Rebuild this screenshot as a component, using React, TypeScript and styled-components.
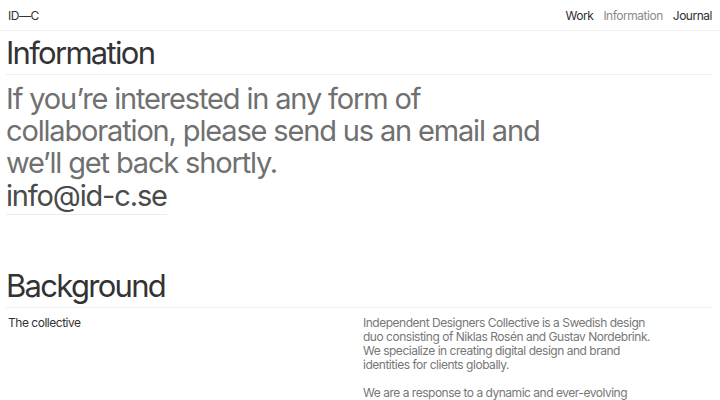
import React from "react";
import styled, { createGlobalStyle } from "styled-components";

const GlobalStyle = createGlobalStyle`
  html, body {
    margin: 0;
    padding: 0;
    background: #ffffff;
  }
  body {
    font-family: "Inter", "Liberation Sans", sans-serif;
    color: #333333;
    -webkit-font-smoothing: antialiased;
  }
`;

interface INavLinkProps {
  $active?: boolean;
}

const Page = styled.div`
  width: 720px;
  height: 400px;
  overflow: hidden;
`;

const Header = styled.header`
  height: 30px;
  display: flex;
  align-items: center;
  justify-content: space-between;
  padding: 0 8px;
  border-bottom: 1px solid #efefef;
  font-size: 12px;
  letter-spacing: -0.04em;
`;

const Logo = styled.div`
  color: #333;
`;

const Nav = styled.nav`
  display: flex;
  gap: 10px;
`;

const NavLink = styled.a<INavLinkProps>`
  color: ${(props) => (props.$active ? "#8a8a8a" : "#2e2e2e")};
  text-decoration: none;
`;

const Section = styled.section`
  padding: 0 8px 0 6px;
`;

const Title = styled.h2`
  margin: 0;
  font-size: 31px;
  line-height: 43px;
  font-weight: 400;
  letter-spacing: -0.055em;
  color: #333;
  border-bottom: 1px solid #efefef;
`;

const Lead = styled.p`
  margin: 8px 0 0;
  max-width: 560px;
  font-size: 29px;
  line-height: 32px;
  font-weight: 400;
  letter-spacing: -0.04em;
  color: #707070;
`;

const Mail = styled.a`
  display: inline-block;
  margin-top: 1px;
  color: #4a4a4a;
  font-size: 29px;
  line-height: 32px;
  letter-spacing: -0.04em;
  text-decoration: none;
  border-bottom: 1px solid #ececec;
  padding-bottom: 2px;
`;

const Spacer = styled.div`
  height: 49px;
`;

const Columns = styled.div`
  display: grid;
  grid-template-columns: 1fr 1fr;
  gap: 8px;
  padding-top: 8px;
  font-size: 12px;
  line-height: 14px;
  letter-spacing: -0.04em;
`;

const Label = styled.div`
  padding-left: 2px;
  color: #333;
`;

const Body = styled.div`
  max-width: 288px;
  color: #777;

  p {
    margin: 0 0 14px;
  }
`;

export default function App() {
  return (
    <Page>
      <GlobalStyle />
      <Header>
        <Logo>ID—C</Logo>
        <Nav>
          <NavLink href="#">Work</NavLink>
          <NavLink href="#" $active>
            Information
          </NavLink>
          <NavLink href="#">Journal</NavLink>
        </Nav>
      </Header>
      <Section>
        <Title>Information</Title>
        <Lead>
          If you’re interested in any form of collaboration, please send us an email and we’ll get back shortly.
        </Lead>
        <Mail href="#">info@id-c.se</Mail>
        <Spacer />
        <Title>Background</Title>
        <Columns>
          <Label>The collective</Label>
          <Body>
            <p>
              Independent Designers Collective is a Swedish design duo consisting of Niklas Rosén and Gustav
              Nordebrink. We specialize in creating digital design and brand identities for clients globally.
            </p>
            <p>We are a response to a dynamic and ever-evolving landscape.</p>
          </Body>
        </Columns>
      </Section>
    </Page>
  );
}
